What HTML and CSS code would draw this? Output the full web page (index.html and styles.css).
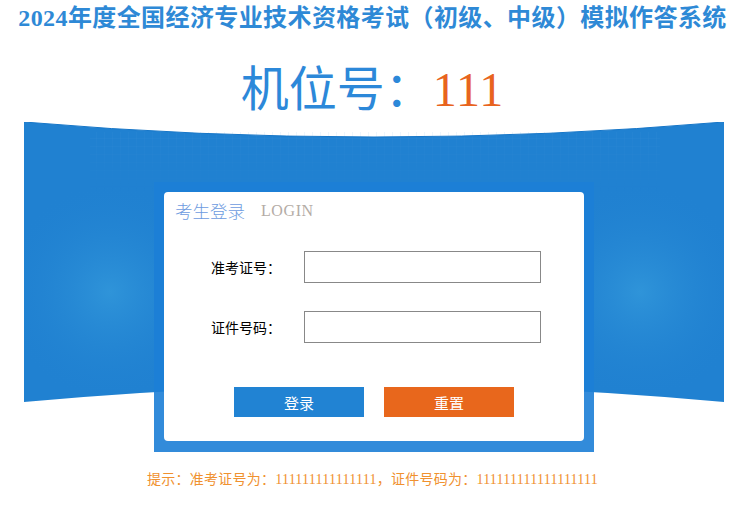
FILE: index.html
```html
<!DOCTYPE html>
<html lang="zh-CN">
<head>
    <meta charset="UTF-8">
    <title>2024年度全国经济专业技术资格考试（初级、中级）模拟作答系统</title>
    <link rel="stylesheet" href="styles.css">
</head>
<body>
    <h1 class="sys-title">2024年度全国经济专业技术资格考试（初级、中级）模拟作答系统</h1>
    <div class="seat">机位号：<span class="seat-no">111</span></div>

    <div class="stage">
        <svg class="stage-bg" viewBox="0 0 745 280" preserveAspectRatio="none">
            <defs>
                <radialGradient id="glowL" cx="110" cy="170" r="110" gradientUnits="userSpaceOnUse">
                    <stop offset="0" stop-color="#2f94d9"/>
                    <stop offset="1" stop-color="#2081d1" stop-opacity="0"/>
                </radialGradient>
                <radialGradient id="glowR" cx="640" cy="170" r="110" gradientUnits="userSpaceOnUse">
                    <stop offset="0" stop-color="#2f94d9"/>
                    <stop offset="1" stop-color="#2081d1" stop-opacity="0"/>
                </radialGradient>
                <pattern id="grid" width="8" height="8" patternUnits="userSpaceOnUse">
                    <path d="M8 0H0V8" fill="none" stroke="#4f9fdf" stroke-width="1" opacity="0.25"/>
                </pattern>
                <linearGradient id="gridFade" x1="0" y1="0" x2="0" y2="1">
                    <stop offset="0" stop-color="#fff" stop-opacity="0.8"/>
                    <stop offset="1" stop-color="#fff" stop-opacity="0"/>
                </linearGradient>
                <mask id="gridMask">
                    <rect x="90" y="10" width="570" height="60" fill="url(#gridFade)"/>
                </mask>
            </defs>
            <path d="M24 0 Q374 30 724 0 L724 280 Q374 247 24 280 Z" fill="#2081d1"/>
            <path d="M24 0 Q374 30 724 0 L724 280 Q374 247 24 280 Z" fill="url(#glowL)"/>
            <path d="M24 0 Q374 30 724 0 L724 280 Q374 247 24 280 Z" fill="url(#glowR)"/>
            <rect x="90" y="10" width="570" height="60" fill="url(#grid)" mask="url(#gridMask)"/>
            <path d="M24 0 Q374 30 724 0" fill="none" stroke="#1676c8" stroke-width="1"/>
        </svg>

        <div class="login-frame">
            <div class="login-card">
                <div class="login-title">
                    <span class="login-cn">考生登录</span>
                    <span class="login-en">LOGIN</span>
                </div>
                <div class="form-row first">
                    <label class="form-label">准考证号：</label>
                    <input class="form-input" type="text">
                </div>
                <div class="form-row">
                    <label class="form-label">证件号码：</label>
                    <input class="form-input" type="password">
                </div>
                <div class="btn-row">
                    <button class="btn btn-login">登录</button>
                    <button class="btn btn-reset">重置</button>
                </div>
            </div>
        </div>
    </div>

    <p class="hint">提示：准考证号为：111111111111111，证件号码为：111111111111111111</p>
</body>
</html>
```

FILE: styles.css
```css
body {
    margin: 0;
    font-family: "Liberation Serif", "Noto Sans CJK SC", serif;
    background: #fff;
    color: #000;
}
.sys-title {
    margin: 0;
    padding-top: 2px;
    font-size: 24px;
    line-height: 32px;
    font-weight: bold;
    color: #2e89d6;
    text-align: center;
    letter-spacing: 0.4px;
}
.seat {
    margin-top: 28px;
    font-size: 48px;
    line-height: 56px;
    color: #2c88d9;
    text-align: center;
}
.seat-no {
    color: #e8641e;
    letter-spacing: 1px;
}
.stage {
    position: relative;
    margin-top: 4px;
    padding-top: 60px;
}
.stage-bg {
    position: absolute;
    left: 0;
    top: 0;
    width: 745px;
    height: 280px;
}
.login-frame {
    position: relative;
    width: 440px;
    margin-left: 154px;
    padding: 10px 10px 11px;
    box-sizing: border-box;
    background-color: rgba(28, 126, 214, 0.9);
}
.login-card {
    height: 249px;
    padding: 8px 11px;
    box-sizing: border-box;
    background: #fff;
    border-radius: 4px;
}
.login-title {
    display: flex;
    align-items: center;
    gap: 16px;
    height: 22px;
}
.login-cn {
    font-family: "Noto Sans CJK SC", sans-serif;
    font-size: 17.5px;
    line-height: 22px;
    color: #6d9be0;
    font-weight: 300;
}
.login-en {
    font-family: "Liberation Serif", serif;
    font-size: 16px;
    line-height: 22px;
    color: #b4aca6;
    letter-spacing: 0.6px;
}
.form-row {
    display: flex;
    align-items: center;
    height: 32px;
    margin-top: 28px;
    padding-left: 36px;
}
.form-row.first {
    margin-top: 29px;
}
.form-label {
    width: 93px;
    font-family: "Noto Sans CJK SC", sans-serif;
    font-size: 14px;
    line-height: 20px;
    color: #000;
}
.form-input {
    width: 237px;
    height: 32px;
    box-sizing: border-box;
    margin: 0;
    border: 1px solid #888;
    border-radius: 0;
    outline: none;
}
.btn-row {
    display: flex;
    justify-content: center;
    gap: 20px;
    margin-top: 44px;
}
.btn {
    width: 130px;
    height: 30px;
    padding: 0;
    border: none;
    color: #fff;
    font-family: "Noto Sans CJK SC", sans-serif;
    font-size: 15px;
    cursor: pointer;
}
.btn-login {
    background: #2183d3;
}
.btn-reset {
    background: #e8671c;
}
.hint {
    margin: 18px 0 0;
    font-size: 14px;
    line-height: 20px;
    color: #f0912f;
    text-align: center;
    letter-spacing: 0.25px;
}
```
